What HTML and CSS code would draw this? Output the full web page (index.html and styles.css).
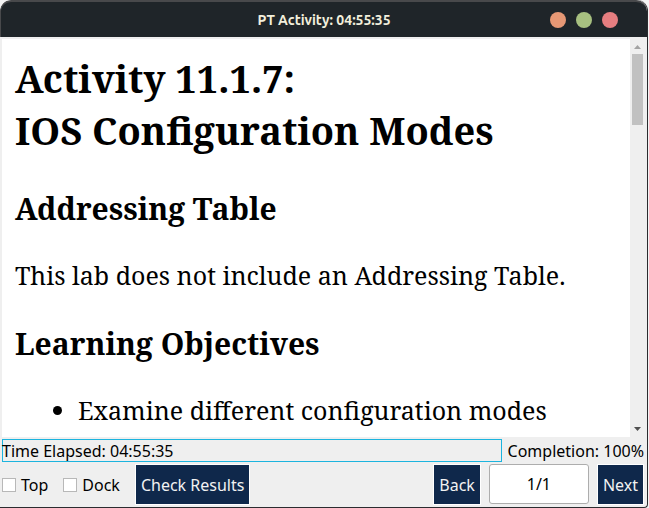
FILE: index.html
```html
<!DOCTYPE html>
<html lang="en">
<head>
<meta charset="utf-8">
<title>PT Activity</title>
<link rel="stylesheet" href="styles.css">
</head>
<body>
<div class="window">
  <header class="titlebar">
    <div class="title">PT Activity: 04:55:35</div>
    <div class="controls">
      <button class="dot minimize" type="button" aria-label="Minimize"></button>
      <button class="dot maximize" type="button" aria-label="Maximize"></button>
      <button class="dot close" type="button" aria-label="Close"></button>
    </div>
  </header>
  <div class="client">
    <div class="viewer">
      <main class="document">
        <h1>Activity 11.1.7:<br>IOS Configuration Modes</h1>
        <h2>Addressing Table</h2>
        <p>This lab does not include an Addressing Table.</p>
        <h2>Learning Objectives</h2>
        <ul>
          <li>Examine different configuration modes</li>
        </ul>
      </main>
      <div class="scrollbar">
        <svg class="arrow" width="7" height="4" viewBox="0 0 7 4"><path d="M0 4L3.5 0L7 4z" fill="#a3a3a3"/></svg>
        <div class="track"><div class="thumb"></div></div>
        <svg class="arrow" width="7" height="4" viewBox="0 0 7 4"><path d="M0 0H7L3.5 4z" fill="#505050"/></svg>
      </div>
    </div>
    <div class="status">
      <div class="elapsed">Time Elapsed: 04:55:35</div>
      <div class="completion">Completion: 100%</div>
    </div>
    <footer class="toolbar">
      <label class="check"><input type="checkbox">Top</label>
      <label class="check"><input type="checkbox">Dock</label>
      <button class="button" type="button">Check Results</button>
      <div class="pager">
        <button class="button" type="button">Back</button>
        <input class="page" type="text" value="1/1" aria-label="Page">
        <button class="button" type="button">Next</button>
      </div>
    </footer>
  </div>
</div>
</body>
</html>
```
FILE: styles.css
```css
* {
  box-sizing: border-box;
}

body {
  margin: 0;
  background: #f4f4f4;
  color: #000;
  font: 16px/22px "Noto Sans", sans-serif;
}

button,
input {
  margin: 0;
  font: inherit;
}

.window {
  display: flex;
  flex-direction: column;
  height: 100vh;
  margin-right: 1px;
  border-right: 1px solid #2b2c2f;
  border-bottom: 1px solid #2b2c2f;
  border-radius: 11px 11px 4px 0;
  background: #efefef;
  overflow: hidden;
}

.titlebar {
  display: grid;
  grid-template-columns: 1fr auto 1fr;
  align-items: center;
  flex: none;
  height: 37px;
  padding-right: 29px;
  padding-left: 29px;
  border-top: 2px solid #48494b;
  border-left: 1px solid #48494b;
  border-radius: 11px 11px 0 0;
  background: #1f2529;
}

.title {
  grid-column: 2;
  color: #f2efdc;
  font: 600 14px/22px "Ubuntu", "Noto Sans", sans-serif;
}

.controls {
  display: flex;
  justify-content: flex-end;
  gap: 10px;
}

.dot {
  width: 16px;
  height: 16px;
  padding: 0;
  border: 0;
  border-radius: 50%;
}

.minimize {
  background: #e69875;
}

.maximize {
  background: #a7c080;
}

.close {
  background: #e67e80;
}

.client {
  display: flex;
  flex: 1;
  flex-direction: column;
  min-height: 0;
  padding: 2px 0 0 2px;
}

.viewer {
  display: flex;
  flex: 1;
  min-height: 0;
}

.document {
  flex: 1;
  padding: 13px;
  background: #fff;
  font-family: "Noto Serif", "DejaVu Serif", serif;
  font-size: 25px;
  line-height: 36px;
  overflow: hidden;
}

h1 {
  margin: 0 0 33px;
  font-size: 38px;
  line-height: 52px;
}

h2 {
  margin: 0 0 28px;
  font-size: 30px;
  line-height: 40px;
}

p {
  margin: 0 0 31px;
}

ul {
  margin: 0;
  padding-left: 63px;
}

.scrollbar {
  display: flex;
  flex: none;
  flex-direction: column;
  align-items: center;
  width: 17px;
  padding: 6px 4px 6px 2px;
}

.arrow {
  flex: none;
}

.track {
  flex: 1;
  width: 11px;
  padding-top: 5px;
}

.thumb {
  height: 71px;
  background: #c1c1c1;
}

.status {
  display: flex;
  gap: 6px;
  padding: 2px 3px 1px 0;
}

.elapsed,
.completion {
  line-height: 24px;
}

.elapsed {
  flex: 1;
  height: 23px;
  box-shadow: inset 0 0 0 1px #1cb4de;
}

.completion {
  height: 23px;
}

.toolbar {
  display: flex;
  align-items: center;
  gap: 15px;
  padding: 1px 3px 2px 0;
}

.check {
  display: flex;
  align-items: center;
  gap: 5px;
}

.check input {
  width: 14px;
  height: 14px;
  border: 1px solid #b8b8b8;
  background: #fff;
  appearance: none;
}

.button {
  height: 41px;
  padding: 0 5px;
  border: 1px solid #fff;
  background: #0f284b;
  color: #f2f2f2;
}

.pager {
  display: flex;
  gap: 8px;
  margin-left: auto;
}

.page {
  width: 100px;
  height: 40px;
  border: 1px solid #adadad;
  border-radius: 3px;
  background: #fff;
  text-align: center;
}
```
